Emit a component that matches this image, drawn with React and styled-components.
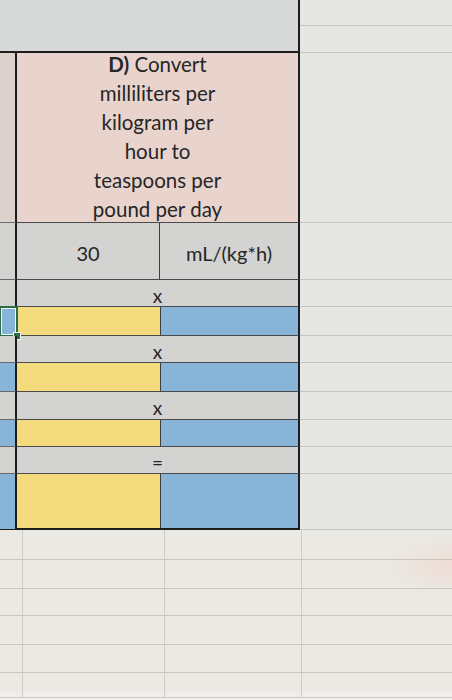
import React from 'react'
import styled, { createGlobalStyle } from 'styled-components'

const GlobalStyle = createGlobalStyle`
  body {
    margin: 0;
    background: #e6e6e4;
    font-family: Lato, "Open Sans", "Liberation Sans", sans-serif;
  }
`

const GRAY = '#d3d3d2'
const PINK = '#e9d4cd'
const YELLOW = '#f4dc7e'
const BLUE = '#88b4d7'

const Sheet = styled.div`
  width: 452px;
  height: 700px;
  overflow: hidden;
  display: flex;
  flex-direction: column;
  background: #e6e6e4;
  color: #262626;
`

const Row = styled.div`
  display: flex;
  height: ${p => p.$h}px;
  flex-shrink: 0;
`

const TopCell = styled.div`
  width: 300px;
  box-sizing: border-box;
  background: #d7d8d8;
  border-right: 2px solid #1d1d1d;
  border-bottom: 2px solid #1d1d1d;
`

const RightStack = styled.div`
  flex: 1;
  display: flex;
  flex-direction: column;
  border-bottom: 1px solid #c6c6c4;
`

const Rest = styled.div`
  flex: 1;
  box-sizing: border-box;
  background: ${p => p.$bg || 'transparent'};
  border-bottom: 1px solid ${p => (p.$line ? '#c4c4c2' : 'transparent')};
`

const Side = styled.div`
  position: relative;
  width: 17px;
  flex-shrink: 0;
  box-sizing: border-box;
  background: ${p => p.$bg};
  border-right: 2px solid #1d1d1d;
  border-bottom: 1px solid ${p => (p.$last ? '#1d1d1d' : '#6a6a6a')};
`

const Selection = styled.div`
  position: absolute;
  inset: -1px -3px -2px -1px;
  border: 2px solid #2a6c47;
  box-shadow: inset 0 0 0 1px #f4f4f4;
`

const Handle = styled.div`
  position: absolute;
  right: -5px;
  bottom: -5px;
  width: 6px;
  height: 6px;
  background: #2a6c47;
  border: 1px solid #f4f4f4;
`

const Block = styled.div`
  width: 283px;
  flex-shrink: 0;
  box-sizing: border-box;
  display: flex;
  background: ${p => p.$bg};
  border-right: 2px solid #1d1d1d;
  border-bottom: ${p => (p.$last ? '2px solid #1d1d1d' : '1px solid #4a4a4a')};
`

const Cell = styled.div`
  flex: ${p => p.$w ? `0 0 ${p.$w}px` : '1'};
  box-sizing: border-box;
  display: flex;
  align-items: center;
  justify-content: center;
  background: ${p => p.$bg};
  border-right: ${p => (p.$divide ? '1px solid #3e3e3e' : 'none')};
  font-size: 20px;
  padding-top: 4px;
`

const Title = styled.div`
  flex: 1;
  display: flex;
  flex-direction: column;
  align-items: center;
  justify-content: center;
  font-size: 20.5px;
  line-height: 29px;
  text-align: center;
  padding-bottom: 2px;
  b {
    font-weight: 700;
  }
`

const Op = styled.div`
  flex: 1;
  display: flex;
  align-items: center;
  justify-content: center;
  font-size: 19px;
  padding-top: 4px;
`

const Lower = styled.div`
  flex: 1;
  display: flex;
  flex-direction: column;
  background:
    radial-gradient(ellipse 70px 30px at 452px 35px, rgba(246, 205, 195, 0.45), transparent),
    linear-gradient(#ebe9e4 0, #ebe9e4 160px, #f0efeb 164px);
`

const LowRow = styled.div`
  display: flex;
  height: ${p => p.$h}px;
  flex-shrink: 0;
  border-bottom: 1px solid #c9c7c2;
`

const LowCell = styled.div`
  flex: ${p => p.$w ? `0 0 ${p.$w}px` : '1'};
  box-sizing: border-box;
  border-right: ${p => (p.$line ? '1px solid #cdcbc6' : 'none')};
`

const steps = [
  { kind: 'op', h: 27, sign: 'x' },
  { kind: 'fill', h: 29, selected: true },
  { kind: 'op', h: 27, sign: 'x' },
  { kind: 'fill', h: 29 },
  { kind: 'op', h: 28, sign: 'x' },
  { kind: 'fill', h: 27 },
  { kind: 'op', h: 27, sign: '=' },
  { kind: 'fill', h: 56, last: true },
]

const lowRows = [29, 28, 26, 28, 27, 24]

export default function App() {
  return (
    <>
      <GlobalStyle />
      <Sheet>
        <Row $h={53}>
          <TopCell />
          <RightStack>
            <Rest $line />
            <Rest />
          </RightStack>
        </Row>

        <Row $h={170}>
          <Side $bg="#ddd1cd" />
          <Block $bg={PINK}>
            <Title>
              <span><b>D)</b> Convert</span>
              <span>milliliters per</span>
              <span>kilogram per</span>
              <span>hour to</span>
              <span>teaspoons per</span>
              <span>pound per day</span>
            </Title>
          </Block>
          <Rest $line />
        </Row>

        <Row $h={57}>
          <Side $bg={GRAY} />
          <Block $bg={GRAY}>
            <Cell $w={143} $divide>30</Cell>
            <Cell>mL/(kg*h)</Cell>
          </Block>
          <Rest $line />
        </Row>

        {steps.map((s, i) => (
          <Row key={i} $h={s.h}>
            <Side $bg={s.kind === 'fill' ? BLUE : GRAY} $last={s.last}>
              {s.selected && (
                <Selection>
                  <Handle />
                </Selection>
              )}
            </Side>
            {s.kind === 'op' ? (
              <Block $bg={GRAY}>
                <Op>{s.sign}</Op>
              </Block>
            ) : (
              <Block $bg={BLUE} $last={s.last}>
                <Cell $w={144} $bg={YELLOW} $divide />
                <Cell $bg={BLUE} />
              </Block>
            )}
            <Rest $line />
          </Row>
        ))}

        <Lower>
          {lowRows.map((h, i) => (
            <LowRow key={i} $h={h}>
              <LowCell $w={23} $line />
              <LowCell $w={142} $line />
              <LowCell $w={137} $line />
              <LowCell />
            </LowRow>
          ))}
        </Lower>
      </Sheet>
    </>
  )
}
